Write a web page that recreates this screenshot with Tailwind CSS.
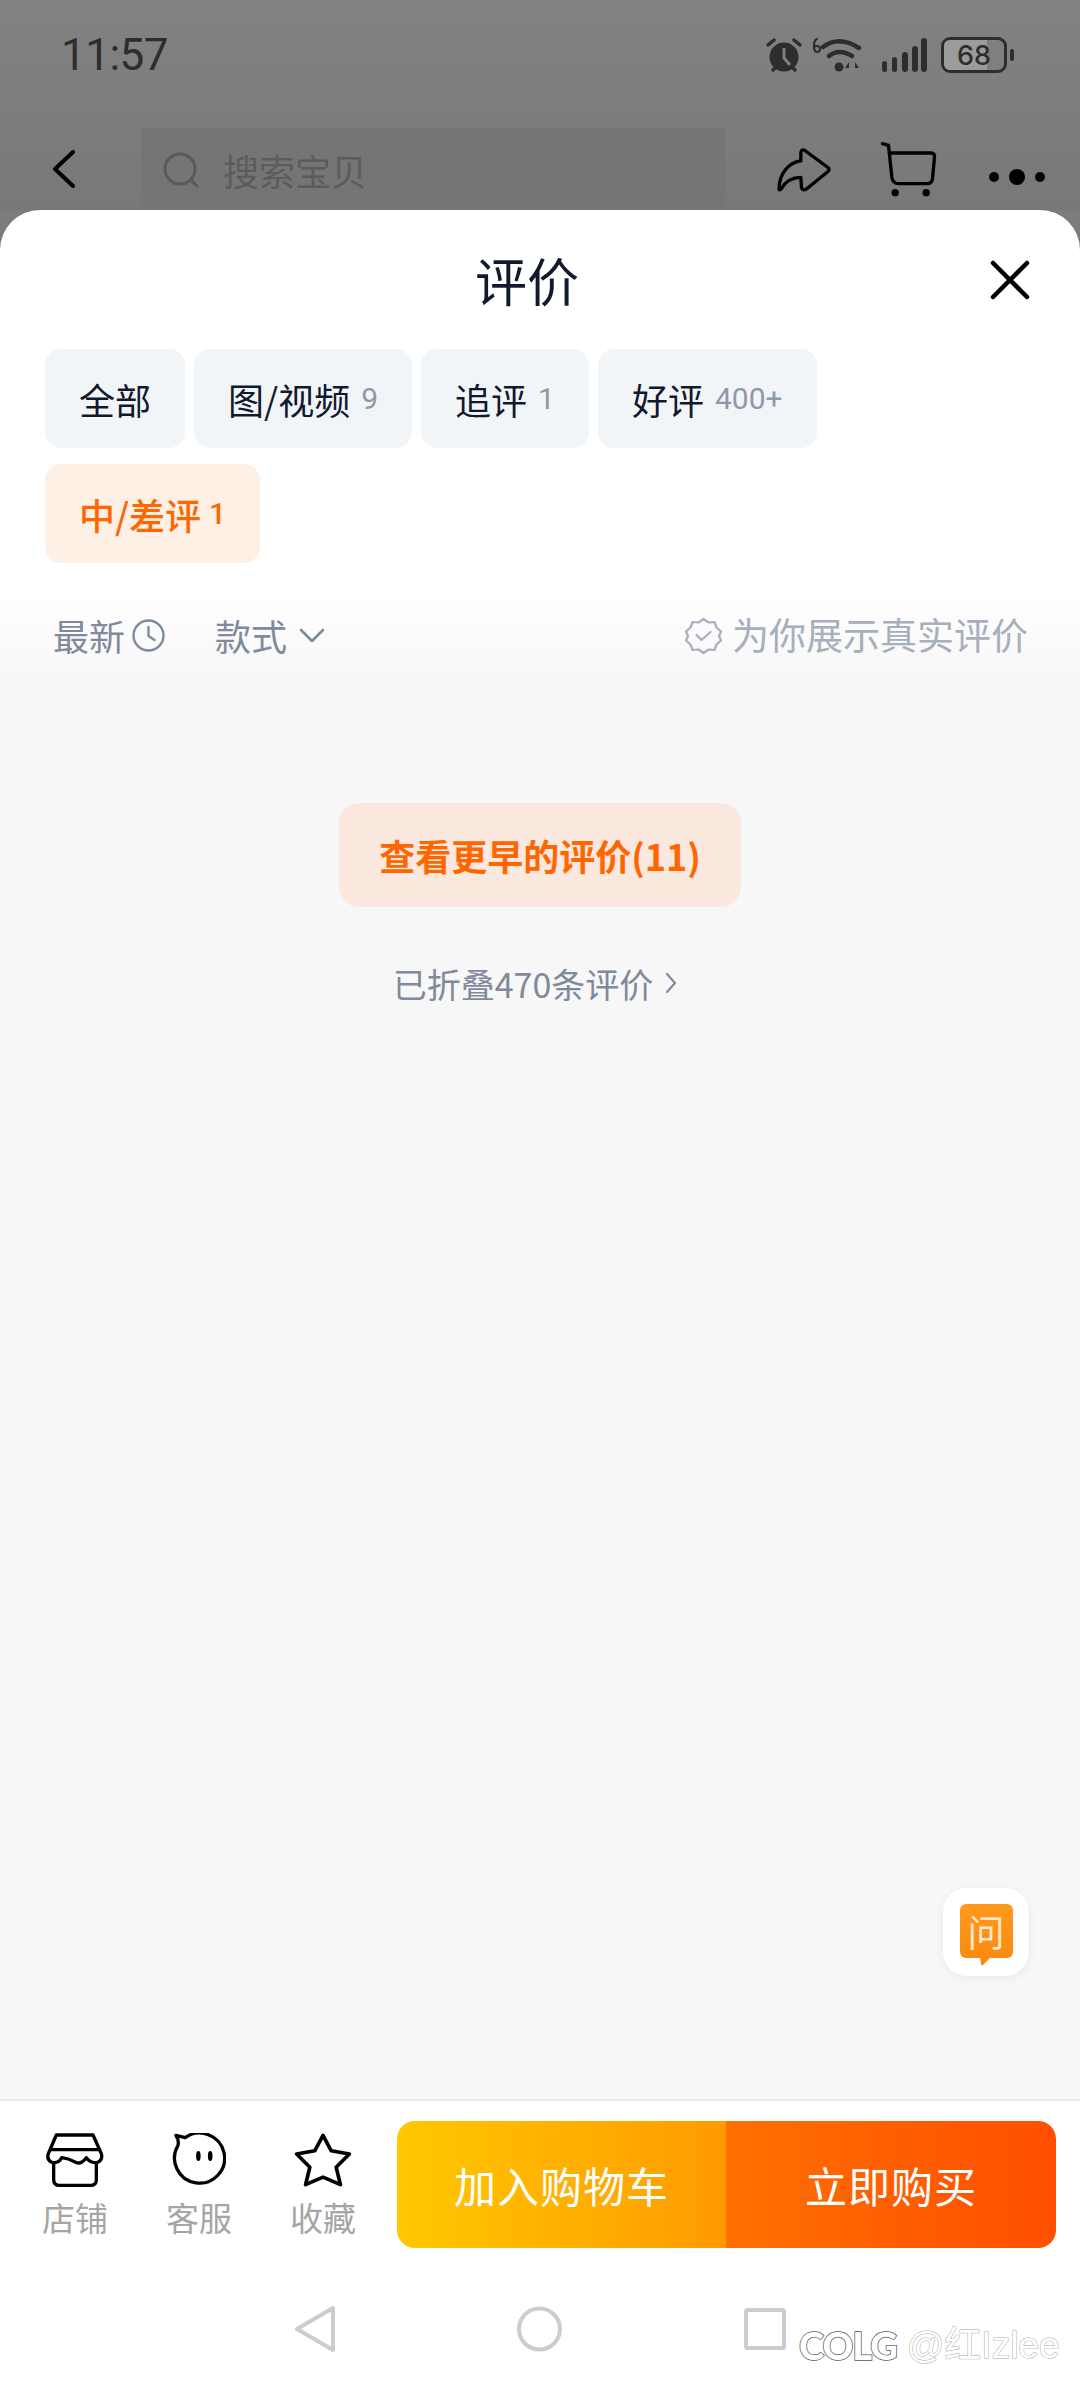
<!doctype html>
<html lang="zh-CN">
  <head>
    <meta charset="UTF-8" />
    <meta name="viewport" content="width=device-width, initial-scale=1.0" />
    <title>评价</title>
    <script src="https://cdn.jsdelivr.net/npm/@tailwindcss/browser@4"></script>
    <style>
      body {
        font-family: "Noto Sans CJK SC", sans-serif;
      }
    </style>
  </head>
  <body class="relative w-[1080px] h-[2387px] overflow-hidden flex flex-col bg-[#7c7c7c]">
    <!-- Dimmed page behind the sheet -->
    <div class="h-[210px] shrink-0 bg-[linear-gradient(to_bottom,#828282,#787878)]">
      <!-- Status bar -->
      <div class="h-[128px] flex items-start pt-[30px] pl-[61px] pr-[66px] justify-between text-[#2d2d2d]">
        <span class="font-['Roboto'] text-[44px] leading-[50px] tracking-[-0.5px]">11:57</span>
        <div class="flex items-center h-[50px]">
          <svg class="w-[36px] h-[36px]" viewBox="0 0 36 36" fill="#2d2d2d">
            <circle cx="18" cy="20" r="14.5" />
            <path d="M18 11v10l6 7" stroke="#7f7f7f" stroke-width="3" fill="none" />
            <path d="M2 8l6-5M34 8l-6-5M7 33l3-3M29 33l-3-3" stroke="#2d2d2d" stroke-width="3.5" stroke-linecap="round" fill="none" />
          </svg>
          <svg class="ml-[11px] w-[52px] h-[36px]" viewBox="0 0 52 36" fill="none" stroke="#2d2d2d" stroke-linecap="round">
            <path d="M10 10q16-12 36 1" stroke-width="4.5" />
            <path d="M16 19q10-8 23 0" stroke-width="4.5" />
            <circle cx="26" cy="30" r="4.5" fill="#2d2d2d" stroke="none" />
            <path d="M36 25l-4 6h4zM41 25v12M42 25l4 6h-4z" fill="#2d2d2d" stroke="none" />
            <path d="M4 2q-3 1-3 7t3 6 3-3-3-3-3 2" stroke-width="2.2" />
          </svg>
          <svg class="ml-[16px] w-[46px] h-[36px]" viewBox="0 0 46 36" fill="#2d2d2d">
            <rect x="1" y="24" width="5" height="11" rx="2.5" />
            <rect x="11" y="20" width="5" height="15" rx="2.5" />
            <rect x="21" y="15" width="6" height="20" rx="3" />
            <rect x="31" y="9" width="6" height="26" rx="3" />
            <rect x="40" y="1" width="6" height="34" rx="3" />
          </svg>
          <div class="relative ml-[14px] w-[66px] h-[36px] rounded-[9px] border-[3px] border-[#2d2d2d] overflow-hidden flex items-center justify-center">
            <div class="absolute left-0 top-0 bottom-0 w-[43px] bg-[#9b9b9b]"></div>
            <span class="relative font-['Inter'] font-medium text-[27px] leading-none text-[#2d2d2d]">68</span>
          </div>
          <div class="ml-[3px] w-[4px] h-[12px] rounded-full bg-[#2d2d2d]"></div>
        </div>
      </div>
      <!-- Product nav -->
      <div class="h-[82px] flex items-start">
        <svg class="ml-[52px] mt-[22px] w-[24px] h-[38px]" viewBox="0 0 24 38" fill="none" stroke="#000" stroke-width="4" stroke-linecap="round" stroke-linejoin="round">
          <path d="M21 2L3 19l18 17" />
        </svg>
        <div class="ml-[65px] w-[584px] h-[82px] bg-[#757575] flex items-start pl-[22px] pt-[24px]">
          <svg class="w-[36px] h-[36px]" viewBox="0 0 36 36" fill="none" stroke="#5a5a5a" stroke-width="3" stroke-linecap="round">
            <circle cx="17" cy="17" r="15" />
            <path d="M28 28l6 6" />
          </svg>
          <span class="ml-[24px] text-[36px] leading-[36px] text-[#5c5c5c]">搜索宝贝</span>
        </div>
        <svg class="ml-[50px] mt-[18px] w-[58px] h-[48px]" viewBox="100 435 175 145" fill="none" stroke="#000" stroke-width="10" stroke-linejoin="round">
          <path d="M112 565C112 520 140 485 178 480L178 455Q180 442 192 450L260 500Q266 506 260 512L195 565Q182 572 180 560L178 530C150 530 130 545 118 565Q114 570 112 565Z" />
        </svg>
        <svg class="ml-[47px] mt-[14px] w-[57px] h-[55px]" viewBox="420 425 170 165" fill="none" stroke="#000" stroke-width="10" stroke-linecap="round" stroke-linejoin="round">
          <path d="M427 430L445 435L455 530Q458 550 475 550H560Q575 550 577 535L583 470Q584 458 572 458H447" />
          <circle cx="465" cy="577" r="11" fill="#000" stroke="none" />
          <circle cx="558" cy="577" r="11" fill="#000" stroke="none" />
        </svg>
        <div class="ml-[52px] mt-[41px] w-[56px] h-[16px] flex items-center justify-between">
          <div class="w-[10px] h-[10px] rounded-full bg-black"></div>
          <div class="w-[16px] h-[16px] rounded-full bg-black"></div>
          <div class="w-[10px] h-[10px] rounded-full bg-black"></div>
        </div>
      </div>
    </div>

    <!-- Review sheet -->
    <div class="flex-1 flex flex-col rounded-t-[40px] bg-[linear-gradient(to_bottom,#fff_0,#fff_380px,#f7f7f7_470px)]">
      <div class="h-[139px] flex items-center justify-between pl-[475px] pr-[50px]">
        <span class="text-[52px] leading-none text-[#11192d]">评价</span>
        <svg class="w-[40px] h-[40px]" viewBox="0 0 40 40" fill="none" stroke="#000" stroke-width="4.5" stroke-linecap="round">
          <path d="M3 3l34 34M37 3L3 37" />
        </svg>
      </div>

      <!-- Filter chips -->
      <div class="flex flex-wrap gap-x-[9px] gap-y-[16px] pl-[45px] pr-[60px]">
        <div class="h-[99px] px-[34px] rounded-[16px] bg-[#f2f5f8] flex items-center text-[36px] text-[#11192d]">全部</div>
        <div class="h-[99px] px-[34px] rounded-[16px] bg-[#f2f5f8] flex items-center text-[36px] text-[#11192d]">图/视频<span class="ml-[11px] font-['Roboto'] text-[30px] text-[#8e99a8]">9</span></div>
        <div class="h-[99px] px-[34px] rounded-[16px] bg-[#f2f5f8] flex items-center text-[36px] text-[#11192d]">追评<span class="ml-[11px] font-['Roboto'] text-[30px] text-[#8e99a8]">1</span></div>
        <div class="h-[99px] px-[34px] rounded-[16px] bg-[#f2f5f8] flex items-center text-[36px] text-[#11192d]">好评<span class="ml-[11px] font-['Roboto'] text-[30px] text-[#8e99a8]">400+</span></div>
        <div class="h-[99px] px-[34px] rounded-[16px] bg-[#fff0e6] flex items-center text-[36px] font-medium text-[#ff6600]">中/差评<span class="ml-[8px] font-['Roboto'] text-[30px]">1</span></div>
      </div>

      <!-- Sort row -->
      <div class="mt-[44px] h-[56px] flex items-center pl-[53px] pr-[52px] text-[36px] text-[#7f8a9c]">
        <span>最新</span>
        <svg class="ml-[7px] w-[33px] h-[33px]" viewBox="0 0 33 33" fill="none" stroke="#7f8a9c" stroke-width="2.4" stroke-linecap="round" stroke-linejoin="round">
          <circle cx="16.5" cy="16.5" r="15" />
          <path d="M16.5 8v9l6 4" />
        </svg>
        <span class="ml-[50px]">款式</span>
        <svg class="ml-[12px] w-[26px] h-[15px]" viewBox="0 0 26 15" fill="none" stroke="#7f8a9c" stroke-width="2.6" stroke-linecap="round" stroke-linejoin="round">
          <path d="M2 2l11 11L24 2" />
        </svg>
        <svg class="ml-auto w-[37px] h-[37px]" viewBox="0 0 37 37" fill="none" stroke="#a7afbd" stroke-width="2.2" stroke-linecap="round" stroke-linejoin="round">
          <path d="M18.5 2l5 3.500 6 -.5 2 5.500 4.500 4-2 4.500 2 4.500-4.500 4-2 5.500-6-.5-5 3.500-5-3.500-6 .5-2-5.500-4.500-4 2-4.500-2-4.500 4.500-4 2-5.500 6 .5z" />
          <path d="M11.500 18l5 5 9-8" />
        </svg>
        <span class="ml-[10px] text-[37px] text-[#a7afbd]">为你展示真实评价</span>
      </div>

      <!-- Collapsed reviews -->
      <div class="flex-1 flex flex-col items-center">
        <div class="mt-[140px] w-[402px] h-[104px] rounded-[20px] bg-[#fbe9df] flex items-center justify-center text-[36px] font-bold text-[#ff6600]">查看更早的评价(11)</div>
        <div class="mt-[51px] mr-[10px] h-[50px] flex items-center text-[34px] text-[#7f8a9c]">
          <span>已折叠470条评价</span>
          <svg class="ml-[12px] w-[12px] h-[22px]" viewBox="0 0 12 22" fill="none" stroke="#7f8a9c" stroke-width="2.2" stroke-linecap="round" stroke-linejoin="round">
            <path d="M2 2l8 9-8 9" />
          </svg>
        </div>
      </div>

      <!-- Bottom action bar -->
      <div class="h-[288px] shrink-0 bg-white border-t-2 border-[#e8e8e8] flex flex-col">
        <div class="flex mt-[20px] pl-[13px]">
          <div class="w-[124px] flex flex-col items-center pt-[12px]">
            <svg class="w-[58px] h-[54px]" viewBox="137 160 174 162" fill="none" stroke="#000" stroke-width="10" stroke-linecap="round" stroke-linejoin="round">
              <path d="M168 166H278L303 222Q308 240 292 248Q270 252 258 234Q240 258 222 246Q205 236 184 234Q176 252 154 248Q138 240 144 222Z" />
              <path d="M150 210H298" />
              <path d="M160 250V300Q160 317 178 317H270Q288 317 288 300V250" />
            </svg>
            <span class="mt-[10px] text-[33px] leading-[40px] text-[#a5a5a5]">店铺</span>
          </div>
          <div class="w-[124px] flex flex-col items-center pt-[12px]">
            <svg class="w-[54px] h-[54px]" viewBox="512 160 164 162" fill="none" stroke="#000" stroke-width="10" stroke-linejoin="round">
              <path d="M524 166L552 173A76 76 0 1 1 530 197Q534 182 524 166Z" />
              <ellipse cx="592" cy="229" rx="7" ry="15" fill="#000" stroke="none" />
              <ellipse cx="628" cy="229" rx="7" ry="15" fill="#000" stroke="none" />
            </svg>
            <span class="mt-[10px] text-[33px] leading-[40px] text-[#a5a5a5]">客服</span>
          </div>
          <div class="w-[124px] flex flex-col items-center pt-[12px]">
            <svg class="w-[58px] h-[54px]" viewBox="878 158 174 164" fill="none" stroke="#000" stroke-width="11" stroke-linejoin="round">
              <path d="M965 165L990 212L1045 222L1005 262L1018 315L965 292L912 315L925 262L885 222L940 212Z" />
            </svg>
            <span class="mt-[10px] text-[33px] leading-[40px] text-[#a5a5a5]">收藏</span>
          </div>
          <div class="ml-[12px] w-[659px] h-[127px] rounded-[18px] overflow-hidden flex text-white text-[42px] tracking-[1px]">
            <div class="w-[329px] bg-[linear-gradient(to_right,#ffc800,#ff9a00)] flex items-center justify-center">加入购物车</div>
            <div class="flex-1 bg-[linear-gradient(to_right,#ff7000,#ff4e00)] flex items-center justify-center">立即购买</div>
          </div>
        </div>
        <!-- System nav -->
        <div class="mt-[58px] pl-[295px] flex items-center gap-[182px]">
          <svg class="w-[40px] h-[46px]" viewBox="0 0 40 46" fill="none" stroke="#cccccc" stroke-width="4" stroke-linejoin="round">
            <path d="M38 2V44L2 23Z" />
          </svg>
          <svg class="w-[45px] h-[46px]" viewBox="0 0 45 46" fill="none" stroke="#cccccc" stroke-width="4">
            <circle cx="22.500" cy="23" r="20.500" />
          </svg>
          <svg class="w-[42px] h-[42px]" viewBox="0 0 42 42" fill="none" stroke="#cccccc" stroke-width="4" stroke-linejoin="round">
            <rect x="2" y="2" width="38" height="38" rx="1.500" />
          </svg>
        </div>
      </div>
    </div>

    <!-- Floating ask button -->
    <div class="absolute left-[943px] top-[1888px] w-[86px] h-[88px] rounded-[24px] bg-white shadow-[0_2px_10px_rgba(0,0,0,0.06)] flex justify-center pt-[16px]">
      <div class="relative w-[53px] h-[54px] rounded-[6px] bg-[linear-gradient(to_bottom,#ff9a1e,#fb8a10)] flex items-center justify-center text-[37px] leading-none text-[#ffe9c9]">
        问
        <svg class="absolute left-[20px] top-[53px] w-[11px] h-[9px]" viewBox="0 0 11 9" fill="#fb8a10">
          <path d="M0 0H11L3 8Q1 9 1 7Z" />
        </svg>
      </div>
    </div>

    <!-- Watermark -->
    <div class="absolute left-[799px] top-[2322px] flex items-center h-[46px]">
      <span class="font-['Lato'] font-black text-[38px] leading-none tracking-[-1px] text-white [-webkit-text-stroke:1.500px_#555] [paint-order:stroke_fill]">COLG</span>
      <span class="ml-[10px] font-['Liberation_Sans','Noto_Sans_CJK_SC',sans-serif] text-[37px] leading-none text-white [-webkit-text-stroke:1px_#aaaaaa] [paint-order:stroke_fill]">@红Izlee</span>
    </div>
  </body>
</html>
